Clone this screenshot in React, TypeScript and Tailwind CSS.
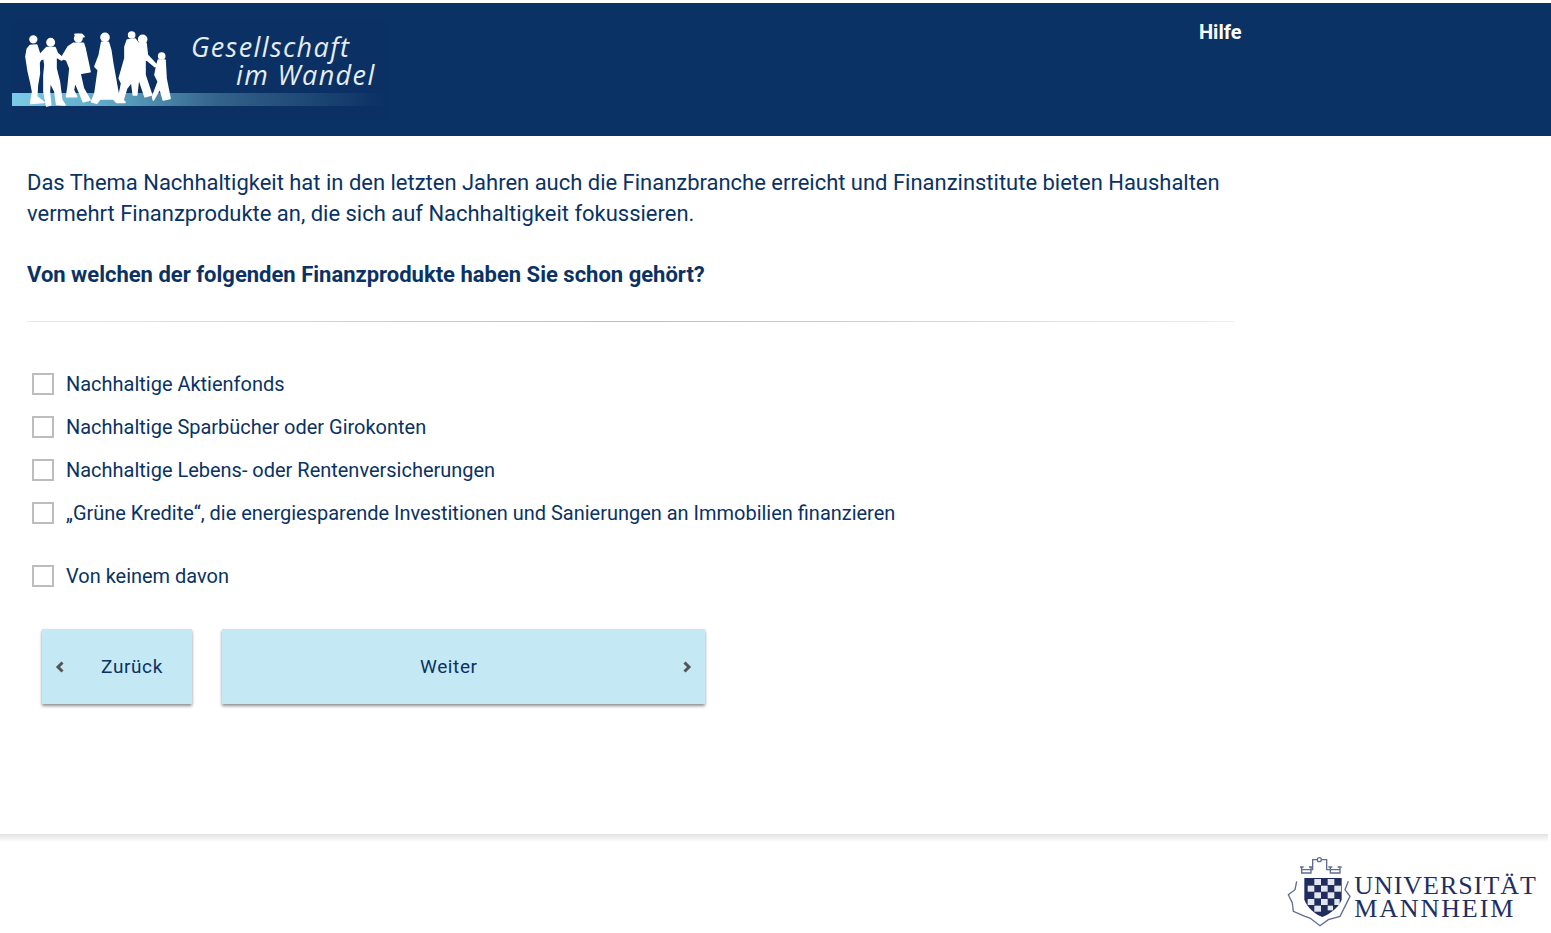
const options = [
  "Nachhaltige Aktienfonds",
  "Nachhaltige Sparbücher oder Girokonten",
  "Nachhaltige Lebens- oder Rentenversicherungen",
  "„Grüne Kredite“, die energiesparende Investitionen und Sanierungen an Immobilien finanzieren",
];

function Option({ label, className = "" }: { label: string; className?: string }) {
  return (
    <label className={`flex h-[43px] items-center ${className}`}>
      <span className="ml-[32px] h-[22px] w-[22px] border-2 border-[#bdbdbd] bg-white" />
      <span className="ml-[12px] pt-[2px] text-[19.98px] text-[#0a3264]">{label}</span>
    </label>
  );
}

function GesellschaftLogo() {
  return (
    <div className="relative ml-[12px] mt-[17px] h-[100px] w-[376px] bg-[#0b3063]">
      <svg width="376" height="100" viewBox="0 0 376 100" className="absolute left-0 top-0 blur-[0.4px]">
        <defs>
          <linearGradient id="band" x1="0" x2="1" y1="0" y2="0">
            <stop offset="0" stopColor="#7ccbe6" />
            <stop offset="0.25" stopColor="#5fa9c6" />
            <stop offset="0.55" stopColor="#33628a" />
            <stop offset="1" stopColor="#0b3063" />
          </linearGradient>
        </defs>
        <rect x="0" y="73" width="375" height="13" fill="url(#band)" />
        <g fill="#ffffff" stroke="#ffffff" strokeWidth="5" strokeLinejoin="round" transform="translate(8,5) scale(0.3333)">
          <circle cx="40" cy="43" r="10" />
          <path d="M30 62 50 60 58 85 62 100 57 115 58 145 52 180 50 215 72 232 32 235 38 200 32 170 25 140 18 95 22 72z" />
          <circle cx="92" cy="52" r="11" />
          <path d="M80 68 105 68 112 85 130 100 125 105 108 95 108 130 118 170 125 225 135 240 110 238 105 200 90 170 88 200 92 240 80 243 72 200 72 150 75 120 72 100 60 105 55 95 70 78z" />
          <circle cx="175" cy="40" r="11" />
          <path d="M165 28 185 28 192 35 170 36z" />
          <path d="M160 55 190 55 195 70 210 140 180 145 190 190 210 225 190 230 165 170 160 195 170 215 140 215 145 180 150 130 140 105 125 100 130 90 145 65z" />
        </g>
        <g fill="#ffffff" stroke="#ffffff" strokeWidth="5" strokeLinejoin="round" transform="translate(78,5) scale(0.3333)">
          <circle cx="45" cy="37" r="12" />
          <path d="M35 52 55 52 62 75 68 115 85 210 105 232 80 232 70 222 30 222 20 235 5 230 15 205 25 135 15 125 28 90z" />
          <circle cx="125" cy="30" r="9" />
          <circle cx="158" cy="43" r="12" />
          <path d="M112 45 135 42 145 55 168 55 172 90 200 120 195 125 165 100 165 150 185 210 165 215 150 170 145 165 140 210 130 210 125 170 110 190 100 222 85 225 95 175 88 160 105 100 105 65z" />
          <circle cx="215" cy="93" r="9" />
          <path d="M205 105 225 105 228 160 240 220 220 225 210 190 190 225 188 215 205 170 195 150 200 125z" />
        </g>
      </svg>
      <div className="absolute left-[179px] top-[13px] font-['Open_Sans',sans-serif] text-[27px] italic leading-[27px] tracking-[1.4px] text-[#e6edf2]">
        Gesellschaft
      </div>
      <div className="absolute left-[224px] top-[41px] font-['Open_Sans',sans-serif] text-[27px] italic leading-[27px] tracking-[1.4px] text-[#e6edf2]">
        im Wandel
      </div>
    </div>
  );
}

function UniLogo() {
  return (
    <div className="flex items-start">
      <svg width="75" height="76" viewBox="0 0 225 228" fill="none" className="-mr-[6px] -mt-[3px] blur-[0.3px]">
        <g stroke="#5f6d92" strokeWidth="4">
          <circle cx="103" cy="20" r="6" />
          <path d="M97 20H83V50H50M109 20H125V50H165" />
          <path d="M50 42V60H78V42M136 42V60H165V42M45 42H56M72 42H84M130 42H142M158 42H170" />
          <path d="M35 85 30 110 10 125 22 150 25 175 60 190 75 195 105 218 130 200 165 190 180 160 195 130 180 110 190 85" />
        </g>
        <path d="M58 75H170V140C160 165 135 182 112 192 88 182 68 165 58 140z" fill="#1f2c5c" />
        <g fill="#e3e6ee">
          <rect x="88" y="78" width="20" height="18" />
          <rect x="128" y="78" width="20" height="18" />
          <rect x="68" y="98" width="20" height="18" />
          <rect x="108" y="98" width="20" height="18" />
          <rect x="148" y="98" width="20" height="18" />
          <rect x="88" y="118" width="20" height="18" />
          <rect x="128" y="118" width="20" height="18" />
          <rect x="68" y="138" width="20" height="18" />
          <rect x="108" y="138" width="20" height="18" />
          <rect x="148" y="138" width="16" height="18" />
          <rect x="88" y="158" width="20" height="18" />
          <rect x="128" y="158" width="16" height="14" />
        </g>
      </svg>
      <div className="mt-[18px] font-['Liberation_Serif',serif] text-[26px] leading-[23px] text-[#1f2f63]">
        <div className="tracking-[1px]">UNIVERSITÄT</div>
        <div className="tracking-[1.9px]">MANNHEIM</div>
      </div>
    </div>
  );
}

export default function App() {
  return (
    <div className="h-[933px] overflow-hidden bg-white pt-[3px] font-['Roboto',sans-serif]">
      <header className="flex h-[133px] bg-[#0a3264]">
        <GesellschaftLogo />
        <a className="ml-[811px] mt-[17px] text-[20px] font-bold leading-[24px] text-white">Hilfe</a>
      </header>

      <main className="h-[698px] bg-white">
        <div className="w-[1234px] pl-[27px]">
          <p className="pt-[31px] text-[21.98px] leading-[31px] text-[#0a3264]">
            Das Thema Nachhaltigkeit hat in den letzten Jahren auch die Finanzbranche erreicht und Finanzinstitute bieten Haushalten
            <br />
            vermehrt Finanzprodukte an, die sich auf Nachhaltigkeit fokussieren.
          </p>
          <p className="mt-[30px] text-[22px] font-bold leading-[31px] text-[#0a3264]">
            Von welchen der folgenden Finanzprodukte haben Sie schon gehört?
          </p>
          <hr className="mt-[31px] h-px border-0 bg-gradient-to-r from-[#e8e8e8] via-[#bdbdbd] to-[#eeeeee]" />

          <div className="-ml-[27px] mt-[40px]">
            {options.map((o) => (
              <Option key={o} label={o} />
            ))}
            <Option label="Von keinem davon" className="mt-[20px]" />
          </div>

          <div className="ml-[15px] mt-[32px] flex gap-[30px]">
            <button className="relative flex h-[75px] w-[150px] items-center justify-center bg-[#c5e8f5] pl-[30px] pt-[2px] text-[19px] tracking-[0.6px] text-[#0a3264] shadow-[0_2px_3px_rgba(0,0,0,0.45)]">
              <svg width="10" height="12" viewBox="0 0 10 12" className="absolute left-[13px] top-[32px]" fill="none">
                <path d="M7.5 1.5 3 6l4.5 4.5" stroke="#555555" strokeWidth="3" />
              </svg>
              Zurück
            </button>
            <button className="relative flex h-[75px] w-[483px] items-center bg-[#c5e8f5] pl-[198px] pt-[2px] text-[19px] tracking-[0.6px] text-[#0a3264] shadow-[0_2px_3px_rgba(0,0,0,0.45)]">
              Weiter
              <svg width="10" height="12" viewBox="0 0 10 12" className="absolute right-[13px] top-[32px]" fill="none">
                <path d="M2.5 1.5 7 6l-4.5 4.5" stroke="#555555" strokeWidth="3" />
              </svg>
            </button>
          </div>
        </div>
      </main>

      <footer className="h-[99px]">
        <div className="mr-[3px] h-[8px] bg-gradient-to-b from-[#e2e2e2] to-white" />
        <div className="flex justify-end pr-[14px] pt-[14px]">
          <UniLogo />
        </div>
      </footer>
    </div>
  );
}
